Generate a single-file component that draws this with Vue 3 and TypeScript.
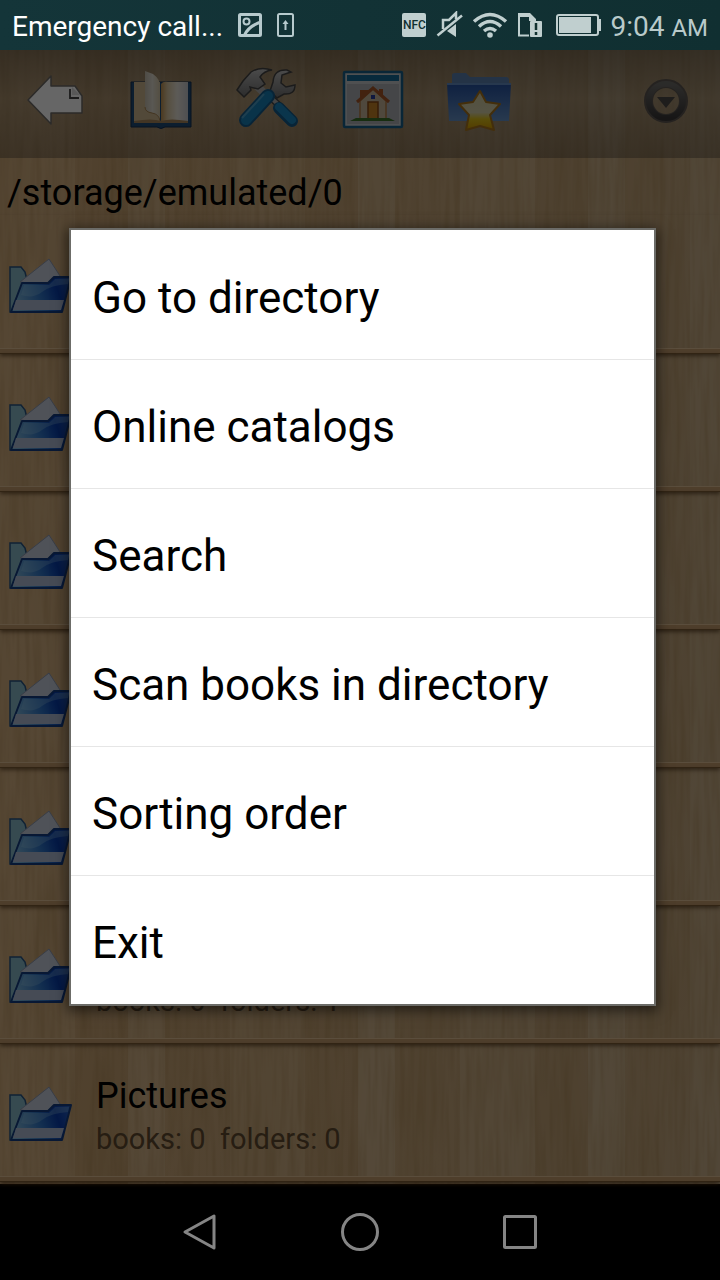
<script setup lang="ts">
interface Folder {
  id: number
  name?: string
  counts?: { books: number; folders: number }
}

const menuItems: string[] = [
  'Go to directory',
  'Online catalogs',
  'Search',
  'Scan books in directory',
  'Sorting order',
  'Exit',
]

const folders: Folder[] = [
  { id: 1 },
  { id: 2 },
  { id: 3 },
  { id: 4 },
  { id: 5 },
  { id: 6, counts: { books: 0, folders: 1 } },
  { id: 7, name: 'Pictures', counts: { books: 0, folders: 0 } },
]
</script>

<template>
  <div class="screen">
    <header class="status">
      <span class="carrier">Emergency call...</span>
      <svg class="notes" width="58" height="26" viewBox="237 12 58 26" fill="none" stroke="#b7cacd" aria-hidden="true">
        <rect x="239.500" y="14.500" width="21" height="21" rx="1" stroke-width="3" />
        <circle cx="246.500" cy="21.500" r="3" stroke-width="2" />
        <path d="M244 36C247 29 252 25 261 22" stroke-width="3" />
        <rect x="278" y="14" width="15" height="22" rx="1.500" stroke-width="2" />
        <path d="M285.500 30v-8" stroke-width="2" />
        <path d="M282.500 24l3-4 3 4z" fill="#b7cacd" stroke="none" />
      </svg>
      <span class="spacer"></span>
      <span class="nfc">NFC</span>
      <svg class="signals" width="166" height="28" viewBox="436 11 166 28" fill="none" stroke="#c0cfcf" aria-hidden="true">
        <path d="M443 29v-9h6l7-7v6" stroke-width="2.500" />
        <path d="M447 31l9 6v-13z" fill="#c0cfcf" stroke="none" />
        <path d="M437.500 35.500L462 15.500" stroke-width="2.500" />
        <path d="M474 21.500q16-14 32 0M479 26.500q11-10 22 0M484 31q6-5 12 0" stroke-width="3.500" />
        <circle cx="490" cy="35" r="2.800" fill="#c0cfcf" stroke="none" />
        <path d="M529 35.500h-10v-20" stroke-width="2" />
        <path d="M518 13h12l6 6v2h-7v-4h-11z" fill="#c0cfcf" stroke="none" />
        <rect x="530" y="21" width="12" height="16" rx="1" fill="#c0cfcf" stroke="none" />
        <path d="M536 23v7M536 32v3" stroke="#10302f" stroke-width="2.500" />
        <rect x="557" y="15" width="41" height="20" rx="2" stroke-width="2" />
        <rect x="559" y="17" width="32" height="16" fill="#c0cfcf" stroke="none" />
        <path d="M599.500 19v12" stroke-width="3" />
      </svg>
      <time class="clock">9:04 <small>AM</small></time>
    </header>

    <main class="browser">
      <svg class="grain" width="100%" height="100%" aria-hidden="true">
        <filter id="fine" x="0" y="0" width="100%" height="100%">
          <feTurbulence type="fractalNoise" baseFrequency="0.2 0.012" numOctaves="2" seed="8" />
          <feColorMatrix values="0 0 0 0 .35  0 0 0 0 .2  0 0 0 0 .06  .6 0 0 0 -.22" />
        </filter>
        <filter id="broad" x="0" y="0" width="100%" height="100%">
          <feTurbulence type="fractalNoise" baseFrequency="0.025 0.004" numOctaves="2" seed="4" />
          <feColorMatrix values="0 0 0 0 .45  0 0 0 0 .28  0 0 0 0 .1  .5 0 0 0 -.18" />
        </filter>
        <rect width="100%" height="100%" filter="url(#broad)" />
        <rect width="100%" height="100%" filter="url(#fine)" />
      </svg>

      <nav class="toolbar" aria-label="Toolbar">
        <button type="button" aria-label="Back">
          <svg width="80" height="80" viewBox="15 60 80 80">
            <path d="M28 100L51 76V86H75L82 96V113H51V124Z" fill="#fff" stroke="#6d6a66" stroke-width="1.500" stroke-linejoin="round" />
            <path d="M70 89v9h9" fill="none" stroke="#444" stroke-width="1.800" />
            <path d="M72 87v8h8z" fill="#ddd" />
          </svg>
        </button>
        <button type="button" aria-label="Open book">
          <svg width="80" height="80" viewBox="121 60 80 80">
            <defs>
              <linearGradient id="page"><stop stop-color="#bd904f" /><stop offset=".25" stop-color="#d9c6a0" /><stop offset=".6" stop-color="#e8e3d9" /><stop offset="1" stop-color="#c3c7cb" /></linearGradient>
              <linearGradient id="leaf"><stop stop-color="#c5bead" /><stop offset=".5" stop-color="#dedbd0" /><stop offset="1" stop-color="#d2c4a4" /></linearGradient>
            </defs>
            <path d="M131 82h60v45h-26q-4 3-8 0h-26z" fill="#204b77" stroke="#122f51" />
            <path d="M134 82h26v39h-26z" fill="#cdb78f" />
            <path d="M161 84q2-3 7-2h20v39h-27z" fill="url(#page)" />
            <path d="M134 121q18-3 27 0q9-3 27 0v2h-54z" fill="#a5855a" />
            <path d="M145 71L153 74Q160 79 160 86V121Q158 114 152 113Q145 112 145 107Z" fill="url(#leaf)" />
            <path d="M145 107q0 5 7 6t8 8" fill="none" stroke="#a88350" />
          </svg>
        </button>
        <button type="button" aria-label="Settings">
          <svg width="80" height="80" viewBox="227 60 80 80">
            <defs>
              <linearGradient id="steel" x2="0" y2="1"><stop stop-color="#bbb" /><stop offset="1" stop-color="#707070" /></linearGradient>
            </defs>
            <path d="M267 94L283 109" stroke="#454545" stroke-width="7" />
            <path d="M267 94L283 109" stroke="#aaa" stroke-width="4" />
            <path d="M287 70q-13-1-14 12l-3 9 7 7 7-4q11 1 11-9l-9 2-5-4 1-8 9-3z" fill="url(#steel)" stroke="#444" stroke-width="1.500" />
            <path d="M279 108l13 13" stroke="#145b8b" stroke-width="12" stroke-linecap="round" />
            <path d="M279 107l13 13" stroke="#1b86bd" stroke-width="8" stroke-linecap="round" />
            <path d="M257 86l8 8" stroke="#aaa" stroke-width="8" />
            <path d="M237 90l7 7 7-7-1-3 8 2 7-5-5-7q4-6 12-7-12-4-21 2l-8 9z" fill="url(#steel)" stroke="#444" stroke-width="1.500" />
            <path d="M268 96L246 120" stroke="#145b8b" stroke-width="14" stroke-linecap="round" />
            <path d="M268 96L246 120" stroke="#1880b7" stroke-width="10" stroke-linecap="round" />
            <path d="M264 94L242 118" stroke="#4a9cc5" stroke-width="2" />
          </svg>
        </button>
        <button type="button" aria-label="Home">
          <svg width="80" height="80" viewBox="333 60 80 80">
            <rect x="344" y="72" width="58" height="55" rx="1" fill="#c5c8cb" stroke="#17608b" stroke-width="2.500" />
            <path d="M347 75h52v6h-52z" fill="#146997" />
            <path d="M347 84h52v40h-52z" fill="#acafb4" />
            <path d="M362 99V92h5v5M381 89v8" fill="none" stroke="#a85527" stroke-width="4" />
            <path d="M360 101l13-12 13 12v18h-26z" fill="#c5b599" stroke="#b27b42" stroke-width="1.500" />
            <path d="M357 102l16-14 16 14" fill="none" stroke="#a65628" stroke-width="3" />
            <path d="M368 102h10v17h-10z" fill="#c58227" stroke="#874815" stroke-width="1.500" />
            <path d="M371 95h4v4h-4z" fill="#263d9c" />
            <path d="M350 121l6-3h33l6 3z" fill="#3b7029" />
          </svg>
        </button>
        <button type="button" aria-label="Favorites">
          <svg width="80" height="80" viewBox="439 60 80 80">
            <defs>
              <linearGradient id="fav" x2="0" y2="1"><stop stop-color="#2450a0" /><stop offset="1" stop-color="#6591c5" /></linearGradient>
              <linearGradient id="gold" x2="0" y2="1"><stop stop-color="#cfc9a0" /><stop offset=".55" stop-color="#d5d0a9" /><stop offset=".72" stop-color="#dcc018" /><stop offset="1" stop-color="#d09500" /></linearGradient>
            </defs>
            <path d="M452 78v-3q0-2 3-2h11l4 4h36q3 0 3 3v10h-57z" fill="#5b7fae" />
            <path d="M447 83h64l-2 38h-60z" fill="url(#fav)" />
            <path d="M447 83h64v2h-64z" fill="#628dc2" />
            <path d="M480 91l6 11 14 2-10 11 4 15-14-4-14 4 3-15-10-11 14-2z" fill="url(#gold)" stroke="#a8741d" stroke-width="2" stroke-linejoin="round" />
          </svg>
        </button>
        <button type="button" class="more" aria-label="More">
          <svg width="80" height="80" viewBox="626 60 80 80">
            <defs>
              <linearGradient id="ring" x2="0" y2="1"><stop stop-color="#6d6b68" /><stop offset="1" stop-color="#3a3838" /></linearGradient>
            </defs>
            <circle cx="666" cy="101" r="17.500" fill="none" stroke="#5c5650" stroke-width="9" />
            <circle cx="666" cy="101" r="17" fill="none" stroke="url(#ring)" stroke-width="6" />
            <path d="M657 97h18l-9 11z" fill="#4d4946" />
          </svg>
        </button>
      </nav>

      <h1 class="path">/storage/emulated/0</h1>
      <ul class="files">
        <li v-for="f in folders" :key="f.id" class="file">
          <svg class="folder" width="64" height="60" viewBox="0 0 64 60" aria-hidden="true">
            <defs>
              <linearGradient id="front" x1="0" y1=".4" x2="1" y2=".2"><stop stop-color="#80bade" /><stop offset=".45" stop-color="#2f75c7" /><stop offset=".75" stop-color="#083cac" /><stop offset="1" stop-color="#285ec0" /></linearGradient>
            </defs>
            <path d="M1 11h11l4 5 2 8-15 32H1z" fill="#87bac9" stroke="#285482" stroke-width="1.500" />
            <path d="M11 26L40 3l13 20v8z" fill="#c6cddc" stroke="#8d99b1" />
            <path d="M13 27h26l6-6h17L53 56H2z" fill="url(#front)" stroke="#153d82" stroke-width="2" stroke-linejoin="round" />
            <path d="M15 29h25l6-6h14l-1 5q-17 1-26 8T12 39z" fill="#9ed1ec" opacity=".3" />
            <path d="M7 44h48l-3 10H4z" fill="#aebbd5" />
          </svg>
          <div class="info">
            <h2>{{ f.name }}</h2>
            <p v-if="f.counts">books: {{ f.counts.books }}&nbsp; folders: {{ f.counts.folders }}</p>
          </div>
        </li>
      </ul>

      <div class="scrim">
        <div class="dialog" role="menu">
          <button v-for="item in menuItems" :key="item" type="button" role="menuitem">{{ item }}</button>
        </div>
      </div>
    </main>

    <nav class="system" aria-label="System navigation">
      <button type="button" aria-label="Back">
        <svg width="40" height="40" viewBox="0 0 40 40"><path d="M5 20L34 4v32z" /></svg>
      </button>
      <button type="button" aria-label="Home">
        <svg width="40" height="40" viewBox="0 0 40 40"><circle cx="20" cy="20" r="17.500" /></svg>
      </button>
      <button type="button" aria-label="Recent apps">
        <svg width="40" height="40" viewBox="0 0 40 40"><rect x="4.500" y="4.500" width="31" height="31" rx="1" /></svg>
      </button>
    </nav>
  </div>
</template>

<style>
body {
  margin: 0;
  background: #000;
}
</style>

<style scoped>
.screen {
  min-height: 100vh;
  display: flex;
  flex-direction: column;
  font-family: Roboto, "Noto Sans", sans-serif;
}
button {
  border: 0;
  padding: 0;
  background: none;
  font: inherit;
  color: inherit;
}
svg {
  display: block;
}
.status {
  display: flex;
  align-items: center;
  height: 50px;
  padding: 0 12px;
  background: linear-gradient(90deg, #143539, #102f31);
  color: #fff;
  font-size: 28px;
  white-space: nowrap;
}
.carrier,
.clock {
  padding-top: 3px;
}
.notes {
  margin-left: 14px;
}
.spacer {
  flex: 1;
}
.nfc {
  width: 24px;
  height: 24px;
  line-height: 25px;
  border-radius: 2px;
  background: #c0cfcf;
  color: #10302f;
  font-family: Roboto, sans-serif;
  font-size: 12px;
  font-weight: 500;
  text-align: center;
}
.signals {
  margin: 0 8px 0 10px;
}
.clock {
  color: #b9caca;
}
.clock small {
  font-size: 24px;
}
.browser {
  position: relative;
  flex: 1;
  padding-bottom: 3px;
  background:
    repeating-linear-gradient(90deg, transparent 0 75px, #8d5a2020 75px 128px, #fff1 128px 165px, #8d5a2018 165px 230px),
    linear-gradient(90deg, #d6b182, #cfb085 50%, #cab08a);
}
.grain {
  position: absolute;
  inset: 0;
}
.toolbar {
  position: relative;
  display: flex;
  align-items: center;
  height: 108px;
  padding: 0 1px 0 2px;
  box-sizing: border-box;
  background: linear-gradient(#443e3480, #6f695c60 45%, #39322a60);
}
.toolbar button {
  width: 106px;
  padding-bottom: 8px;
}
.toolbar svg {
  margin: 0 auto;
}
.toolbar .more {
  margin-left: auto;
}
.path {
  position: relative;
  margin: 0;
  padding: 0 7px;
  height: 57px;
  line-height: 70px;
  font-size: 36px;
  font-weight: 400;
}
.files {
  position: relative;
  margin: 0;
  padding: 0;
  list-style: none;
}
.file {
  display: flex;
  align-items: center;
  height: 138px;
  box-sizing: border-box;
  padding: 8px 9px 0;
  border-bottom: 4px solid #c39c6c;
  box-shadow: inset 0 -1px 0 #e0c196, 0 1px 0 #7c5a34, 0 3px 4px #3b210aa0;
}
.info {
  margin-left: 23px;
  padding-top: 4px;
}
.info h2 {
  margin: 0;
  min-height: 46px;
  font-size: 36px;
  line-height: 46px;
  font-weight: 400;
}
.info p {
  margin: 0;
  font-size: 29px;
  line-height: 40px;
  color: #60492f;
}
.scrim {
  position: absolute;
  inset: 0;
  display: flex;
  align-items: center;
  padding: 0 64px 0 69px;
  background: #0009;
}
.dialog {
  flex: 1;
  display: flex;
  flex-direction: column;
  border: 2px solid #6c6c68;
  background: #fff;
  box-shadow: 0 3px 12px 2px #0008;
}
.dialog button {
  height: 129px;
  padding: 6px 21px 0;
  text-align: left;
  font-size: 44px;
  color: #000;
}
.dialog button + button {
  border-top: 1px solid #e6e6e6;
}
.system {
  display: flex;
  justify-content: center;
  align-items: center;
  gap: 120px;
  height: 96px;
  background: #000;
}
.system svg {
  fill: none;
  stroke: #858585;
  stroke-width: 3;
  stroke-linejoin: round;
}
</style>
